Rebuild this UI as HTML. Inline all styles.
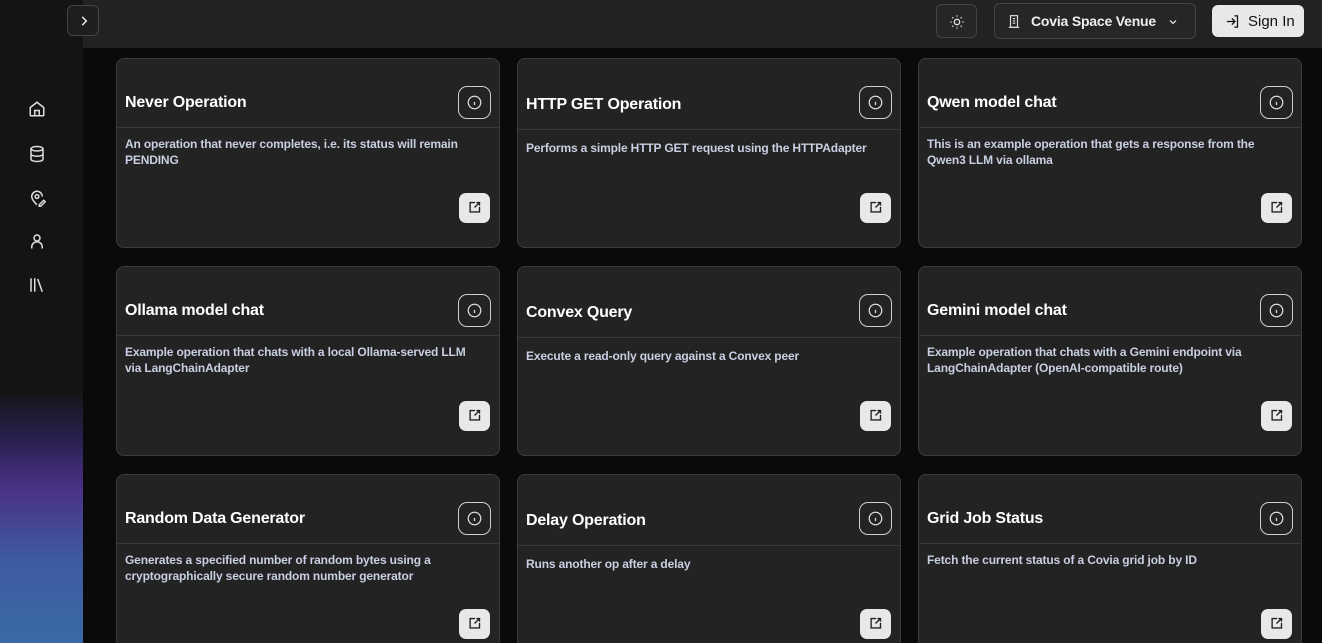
<!DOCTYPE html>
<html><head><meta charset="utf-8"><style>
*{box-sizing:border-box;margin:0;padding:0}
html,body{width:1322px;height:643px;overflow:hidden}
body{background:#0a0a0a;font-family:"Liberation Sans",sans-serif;position:relative}
#wrap{position:absolute;left:0;top:0;width:1322px;height:643px;overflow:hidden}
.side{position:absolute;left:0;top:0;width:83px;height:643px;background:linear-gradient(180deg,#141414 0,#141414 390px,#2a2050 440px,#4a3288 490px,#3e5aa0 560px,#3a6aa8 643px)}
.side svg{position:absolute;left:28px}
.hdr{position:absolute;left:83px;top:0;right:0;height:48px;background:#222}
.btn{position:absolute;border:1px solid #444;border-radius:6px;background:#262626;color:#eee}
.card{position:absolute;width:384px;height:190px;background:#232323;border:1px solid #3c3c3c;border-radius:8px}
.card h3{position:absolute;left:8px;top:35px;font-size:16px;color:#fff;font-weight:bold;letter-spacing:-0.2px}
.card .sep{position:absolute;left:0;right:0;top:68px;border-top:1px solid #3a3a3a}
.card p{position:absolute;left:8px;top:77px;right:24px;font-size:12px;line-height:16px;color:#c9cfe2;font-weight:bold;letter-spacing:-0.15px}
.info{position:absolute;right:8px;top:27px;width:33px;height:33px;border:1px solid #cfcfcf;border-radius:9px}
.info svg{position:absolute;left:8px;top:8px}
.ext{position:absolute;right:9px;top:134px;width:31px;height:30px;background:#e8e8e8;border-radius:7px}
.ext svg{position:absolute;left:8px;top:7px}
</style></head><body><div id="wrap">
<div class="side">
<svg style="top:100px" width="18" height="18" viewBox="0 0 24 24" fill="none" stroke="#ddd" stroke-width="2"><path d="M3 10l9-7 9 7v10a1 1 0 0 1-1 1H4a1 1 0 0 1-1-1z"/><path d="M9 21v-7h6v7"/></svg>
<svg style="top:145px" width="18" height="18" viewBox="0 0 24 24" fill="none" stroke="#ddd" stroke-width="2"><ellipse cx="12" cy="5" rx="8" ry="3"/><path d="M4 5v14c0 1.7 3.6 3 8 3s8-1.3 8-3V5M4 12c0 1.7 3.6 3 8 3s8-1.3 8-3"/></svg>
<svg style="top:189px" width="18" height="18" viewBox="0 0 24 24" fill="none" stroke="#ddd" stroke-width="2"><path d="M12 21s-7-6-7-11a7 7 0 0 1 14 0"/><circle cx="12" cy="10" r="2.5"/><path d="M15 21l6-6 2 2-6 6h-2z"/></svg>
<svg style="top:232px" width="18" height="18" viewBox="0 0 24 24" fill="none" stroke="#ddd" stroke-width="2"><circle cx="12" cy="8" r="4"/><path d="M5 22v-2a7 7 0 0 1 14 0v2"/></svg>
<svg style="top:276px" width="18" height="18" viewBox="0 0 24 24" fill="none" stroke="#ddd" stroke-width="2"><path d="M4 3v18M9 3v18M13 4l6 17"/></svg>
</div>
<div class="hdr">
<div class="btn" style="left:-16px;top:5px;width:32px;height:31px;background:#1e1e1e"><svg style="position:absolute;left:9px;top:8px" width="14" height="14" viewBox="0 0 24 24" fill="none" stroke="#eee" stroke-width="2.5"><path d="M9 5l7 7-7 7"/></svg></div>
<div class="btn" style="left:853px;top:4px;width:41px;height:34px"><svg style="position:absolute;left:12px;top:9px" width="16" height="16" viewBox="0 0 24 24" fill="none" stroke="#ddd" stroke-width="2"><circle cx="12" cy="12" r="4"/><path d="M12 2v2M12 20v2M2 12h2M20 12h2M5 5l1.5 1.5M17.5 17.5L19 19M5 19l1.5-1.5M17.5 6.5L19 5"/></svg></div>
<div class="btn" style="left:911px;top:3px;width:202px;height:36px;font-weight:bold;font-size:14px;line-height:34px;padding-left:36px;letter-spacing:-0.2px">Covia Space Venue<svg style="position:absolute;left:12px;top:10px" width="14" height="15" viewBox="0 0 24 24" fill="none" stroke="#ddd" stroke-width="2"><rect x="6" y="2" width="12" height="20"/><path d="M3 22h18M10 7h4M10 11h4M10 15h4"/></svg><svg style="position:absolute;left:172px;top:12px" width="12" height="12" viewBox="0 0 24 24" fill="none" stroke="#ddd" stroke-width="2.5"><path d="M6 9l6 6 6-6"/></svg></div>
<div class="btn" style="left:1129px;top:5px;width:92px;height:32px;background:#e8e8e8;border-color:#e8e8e8;color:#111;font-size:15px;line-height:31px;padding-left:35px">Sign In<svg style="position:absolute;left:12px;top:8px" width="15" height="15" viewBox="0 0 24 24" fill="none" stroke="#111" stroke-width="2"><path d="M3 12h12M11 7l5 5-5 5M15 3h5v18h-5"/></svg></div>
</div>
<div id="g"></div>
</div>
<script>
var d=[["Never Operation","An operation that never completes, i.e. its status will remain PENDING"],["HTTP GET Operation","Performs a simple HTTP GET request using the HTTPAdapter"],["Qwen model chat","This is an example operation that gets a response from the Qwen3 LLM via ollama"],["Ollama model chat","Example operation that chats with a local Ollama-served LLM via LangChainAdapter"],["Convex Query","Execute a read-only query against a Convex peer"],["Gemini model chat","Example operation that chats with a Gemini endpoint via LangChainAdapter (OpenAI-compatible route)"],["Random Data Generator","Generates a specified number of random bytes using a cryptographically secure random number generator"],["Delay Operation","Runs another op after a delay"],["Grid Job Status","Fetch the current status of a Covia grid job by ID"]];
var xs=[116,517,918],ys=[58,266,474],h="";
d.forEach(function(c,i){var off=(i%3==1)?2:0;h+='<div class="card" style="left:'+xs[i%3]+'px;top:'+ys[Math.floor(i/3)]+'px"><h3 style="top:'+(35+off)+'px">'+c[0]+'</h3><div class="info"><svg width="15" height="15" viewBox="0 0 24 24" fill="none" stroke="#ddd" stroke-width="2"><circle cx="12" cy="12" r="10"/><path d="M12 16v-5M12 8h.01"/></svg></div><div class="sep" style="top:'+(68+off)+'px"></div><p style="top:'+(77+off*2)+'px">'+c[1]+'</p><div class="ext"><svg width="15" height="15" viewBox="0 0 24 24" fill="none" stroke="#222" stroke-width="2.2"><path d="M13 4H5v15h15v-8"/><path d="M12 12l8-8M15 4h5v5"/></svg></div></div>'});
document.getElementById("g").innerHTML=h;
</script>
</body></html>
